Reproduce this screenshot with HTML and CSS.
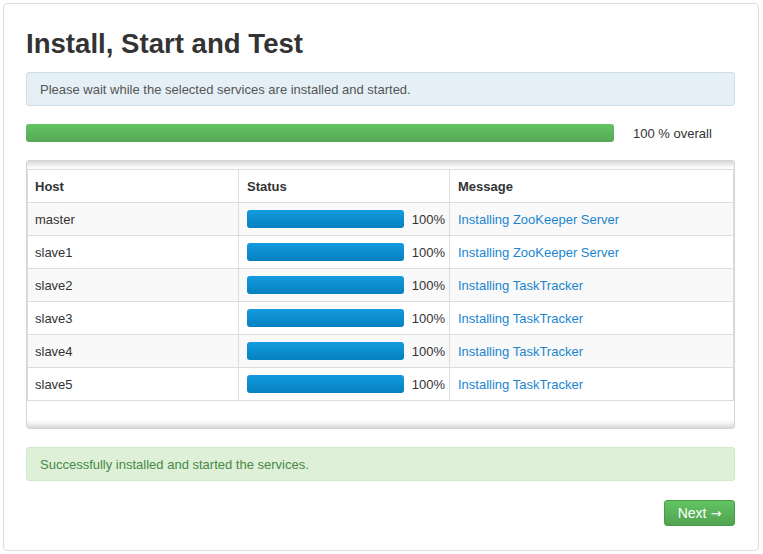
FILE: index.html
```html
<!DOCTYPE html>
<html>
<head>
<meta charset="utf-8">
<link rel="stylesheet" href="styles.css">
</head>
<body>
<div class="card">
  <h1 class="title">Install, Start and Test</h1>
  <div class="alert alert-info">Please wait while the selected services are installed and started.</div>
  <div class="overall">
    <div class="progress progress-green"><div class="bar" style="width:100%"></div></div>
    <span class="overall-label">100 % overall</span>
  </div>
  <div class="table-box">
    <table class="hosts">
      <thead>
        <tr><th class="c-host">Host</th><th class="c-status">Status</th><th>Message</th></tr>
      </thead>
      <tbody>
        <tr><td>master</td><td><div class="status"><div class="progress progress-blue"><div class="bar" style="width:100%"></div></div><span class="pct">100%</span></div></td><td><a class="msg">Installing ZooKeeper Server</a></td></tr>
        <tr><td>slave1</td><td><div class="status"><div class="progress progress-blue"><div class="bar" style="width:100%"></div></div><span class="pct">100%</span></div></td><td><a class="msg">Installing ZooKeeper Server</a></td></tr>
        <tr><td>slave2</td><td><div class="status"><div class="progress progress-blue"><div class="bar" style="width:100%"></div></div><span class="pct">100%</span></div></td><td><a class="msg">Installing TaskTracker</a></td></tr>
        <tr><td>slave3</td><td><div class="status"><div class="progress progress-blue"><div class="bar" style="width:100%"></div></div><span class="pct">100%</span></div></td><td><a class="msg">Installing TaskTracker</a></td></tr>
        <tr><td>slave4</td><td><div class="status"><div class="progress progress-blue"><div class="bar" style="width:100%"></div></div><span class="pct">100%</span></div></td><td><a class="msg">Installing TaskTracker</a></td></tr>
        <tr><td>slave5</td><td><div class="status"><div class="progress progress-blue"><div class="bar" style="width:100%"></div></div><span class="pct">100%</span></div></td><td><a class="msg">Installing TaskTracker</a></td></tr>
      </tbody>
    </table>
  </div>
  <div class="alert alert-success">Successfully installed and started the services.</div>
  <div class="actions">
    <button class="btn-next">Next <span class="arrow">&rarr;</span></button>
  </div>
</div>
</body>
</html>
```
FILE: styles.css
```css
* { box-sizing: border-box; }
html, body { margin: 0; padding: 0; background: #fff; }
body {
  padding: 3px 4px 3px 3px;
  font-family: "Liberation Sans", Arial, sans-serif;
  font-size: 13px;
  color: #333;
}
.card {
  border: 1px solid #dcdcdc;
  border-radius: 4px;
  height: 548px;
  padding: 22px 23px 0 22px;
}
.title {
  margin: 0 0 10px 0;
  font-size: 27.6px;
  line-height: 36px;
  font-weight: bold;
  color: #333;
}
.alert {
  height: 34px;
  padding: 0 13px;
  display: flex;
  align-items: center;
  border-radius: 3px;
  border: 1px solid;
}
.alert-info {
  background: #e5f0f6;
  border-color: #cfdde6;
  color: #555;
}
.alert-success {
  margin-top: 18px;
  background: #dff0d8;
  border-color: #d3e8c4;
  color: #468847;
}
.overall {
  margin-top: 18px;
  display: flex;
  align-items: center;
  height: 18px;
}
.progress {
  height: 18px;
  border-radius: 3px;
  overflow: hidden;
  background: #f5f5f5;
}
.progress-green { width: 588px; }
.progress-green .bar {
  height: 100%;
  background: linear-gradient(to bottom, #62c462, #57a957);
}
.overall-label { margin-left: 19px; color: #333; }
.table-box {
  margin-top: 18px;
  border: 1px solid #d4d4d4;
  border-radius: 3px;
  padding: 8px 0 27px 0;
  box-shadow: inset 0 9px 7px -7px #c8c8c8, inset 0 -9px 7px -7px #c8c8c8;
  height: 269px;
}
.hosts {
  width: 100%;
  border-collapse: collapse;
  border: 1px solid #ddd;
  background: #fff;
}
.hosts th, .hosts td {
  border: 1px solid #ddd;
  height: 33px;
  padding: 0 7px;
  text-align: left;
  vertical-align: middle;
}
.hosts th { font-weight: bold; color: #333; }
.hosts th + th, .hosts td + td { padding-left: 8px; }
.hosts tbody tr:nth-child(odd) td { background: #f9f9f9; }
.c-host { width: 211px; }
.c-status { width: 211px; }
.status { display: flex; align-items: center; }
.progress-blue { width: 157px; flex: none; }
.progress-blue .bar {
  height: 100%;
  background: linear-gradient(to bottom, #149bdf, #0480be);
}
.pct { margin-left: auto; margin-right: -3px; }
.msg { color: #1a85cf; text-decoration: none; }
.actions {
  margin-top: 19px;
  display: flex;
  justify-content: flex-end;
}
.btn-next {
  width: 71px;
  height: 26px;
  border: 1px solid #4a9b4a;
  border-radius: 3px;
  background: linear-gradient(to bottom, #62c462, #51a351);
  color: #fff;
  font-family: "Liberation Sans", Arial, sans-serif;
  font-size: 14px;
  padding: 0;
}
.arrow { font-family: "DejaVu Sans", sans-serif; font-size: 13px; }
```
